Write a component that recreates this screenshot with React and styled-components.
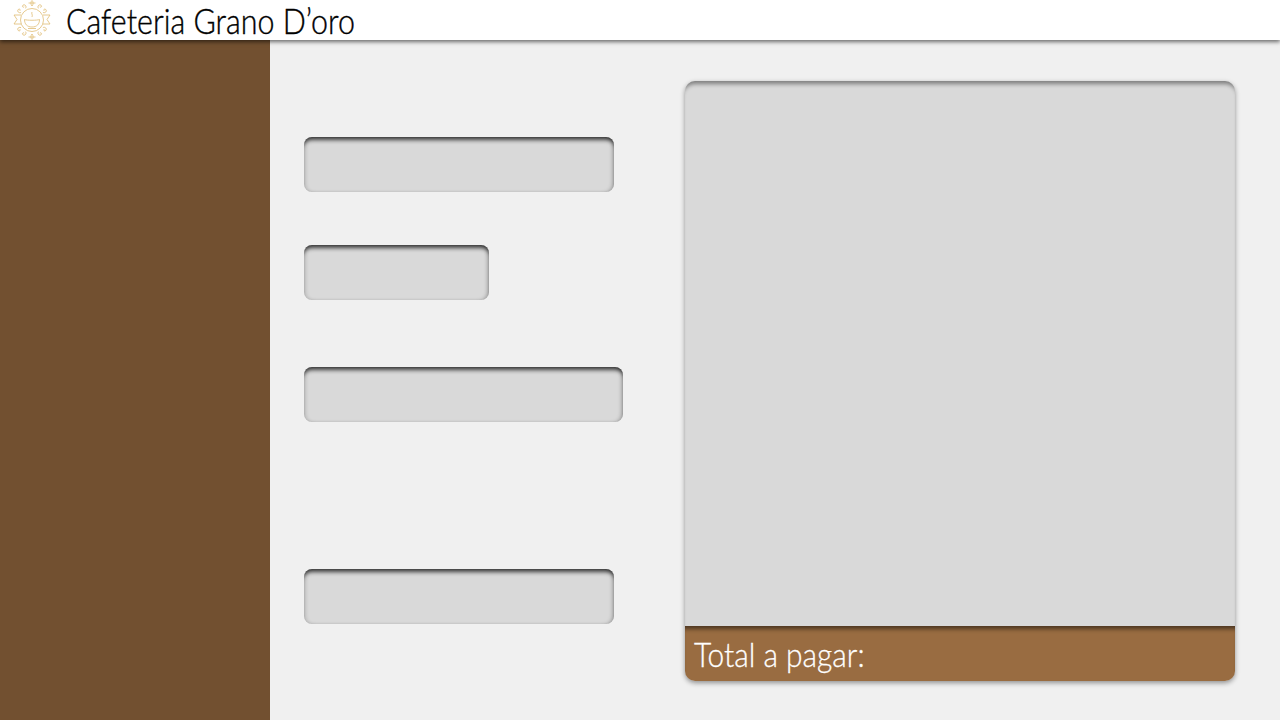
import React from 'react';
import styled, { createGlobalStyle } from 'styled-components';

const GlobalStyle = createGlobalStyle`
  html, body {
    margin: 0;
    padding: 0;
    background: #f0f0f0;
    overflow: hidden;
  }
  * {
    box-sizing: border-box;
  }
`;

const Page = styled.div`
  width: 1280px;
  height: 720px;
  display: flex;
  flex-direction: column;
  font-family: 'Lato', 'Liberation Sans', sans-serif;
`;

const Header = styled.header`
  position: relative;
  z-index: 2;
  height: 40px;
  flex-shrink: 0;
  display: flex;
  align-items: center;
  gap: 15px;
  padding-left: 13px;
  background: #fff;
  box-shadow: 0 2px 4px rgba(0, 0, 0, 0.55);
`;

const Title = styled.h1`
  margin: 0;
  font-size: 36px;
  font-weight: 300;
  line-height: 40px;
  color: #000;
  white-space: nowrap;
  transform: scaleX(0.845);
  transform-origin: left center;
  -webkit-text-stroke: 0.4px #000;
`;

const Body = styled.div`
  flex: 1;
  display: flex;
  min-height: 0;
`;

const Sidebar = styled.aside`
  width: 270px;
  flex-shrink: 0;
  background: #725030;
`;

const Main = styled.main`
  flex: 1;
  display: flex;
  padding: 41px 0 0 34px;
  background: #f0f0f0;
`;

const Form = styled.div`
  width: 381px;
  flex-shrink: 0;
  padding-top: 56px;
  display: flex;
  flex-direction: column;
  align-items: flex-start;
`;

const Field = styled.div`
  width: ${(p) => p.$width}px;
  height: 55px;
  margin-top: ${(p) => p.$top || 0}px;
  border-radius: 8px;
  background: #d9d9d9;
  box-shadow:
    inset 0 6px 4px -3px rgba(0, 0, 0, 0.72),
    inset 3px 0 4px -2px rgba(0, 0, 0, 0.2),
    inset -3px 0 4px -2px rgba(0, 0, 0, 0.35);
`;

const Ticket = styled.section`
  width: 550px;
  height: 600px;
  display: flex;
  flex-direction: column;
  border-radius: 10px;
  overflow: hidden;
  background: #d9d9d9;
  box-shadow:
    inset 0 6px 4px -3px rgba(0, 0, 0, 0.42),
    0 2px 5px rgba(0, 0, 0, 0.4);
`;

const TicketBody = styled.div`
  flex: 1;
`;

const TotalBar = styled.div`
  height: 55px;
  flex-shrink: 0;
  padding-left: 9px;
  display: flex;
  align-items: center;
  background: #996c41;
  box-shadow: inset 0 6px 4px -3px rgba(0, 0, 0, 0.5);
  color: #fff;
`;

const TotalLabel = styled.span`
  font-size: 34px;
  font-weight: 300;
  white-space: nowrap;
  transform: scaleX(0.88);
  transform-origin: left center;
  -webkit-text-stroke: 0.3px #fff;
`;

function Logo() {
  // curls sit on the diagonals, around the ring
  const curls = [42, 138, 222, 318];
  return (
    <svg width='38' height='40' viewBox='0 0 38 40' fill='none' stroke='#e0bd74' strokeWidth='0.8'>
      <circle cx='19' cy='20' r='11.5' />
      {curls.map((r) => (
        <g key={r} transform={`rotate(${r} 19 20)`}>
          <path d='M16 7 C13.5 6.5 13.5 3 16 3 C17.5 3 17.5 5 16 5' />
          <path d='M22 7 C24.5 6.5 24.5 3 22 3 C20.5 3 20.5 5 22 5' />
        </g>
      ))}
      <path d='M19 0.5 C17.5 2 17.5 4 19 6 C20.5 4 20.5 2 19 0.5 Z' />
      <path d='M19 39.5 C17.5 38 17.5 36 19 34 C20.5 36 20.5 38 19 39.5 Z' />
      <path d='M15.5 3 H22.5 M15.5 37 H22.5' />
      <path d='M8 15 H1 L4 19.5 L1 24 H8.5' />
      <path d='M30 15 H37 L34 19.5 L37 24 H29.5' />
      <path d='M11.5 19.5 C14 20.5 24 20.5 26.5 19.5 C26.5 24 24 27 19 27 C14 27 11.5 24 11.5 19.5 Z' />
      <path d='M15 28.5 H23' />
      <path d='M19 12 C18 13.5 20 14.5 19 17' />
    </svg>
  );
}

export default function App() {
  return (
    <Page>
      <GlobalStyle />
      <Header>
        <Logo />
        <Title>Cafeteria Grano D’oro</Title>
      </Header>
      <Body>
        <Sidebar />
        <Main>
          <Form>
            <Field $width={310} />
            <Field $width={185} $top={53} />
            <Field $width={319} $top={67} />
            <Field $width={310} $top={147} />
          </Form>
          <Ticket>
            <TicketBody />
            <TotalBar>
              <TotalLabel>Total a pagar:</TotalLabel>
            </TotalBar>
          </Ticket>
        </Main>
      </Body>
    </Page>
  );
}
